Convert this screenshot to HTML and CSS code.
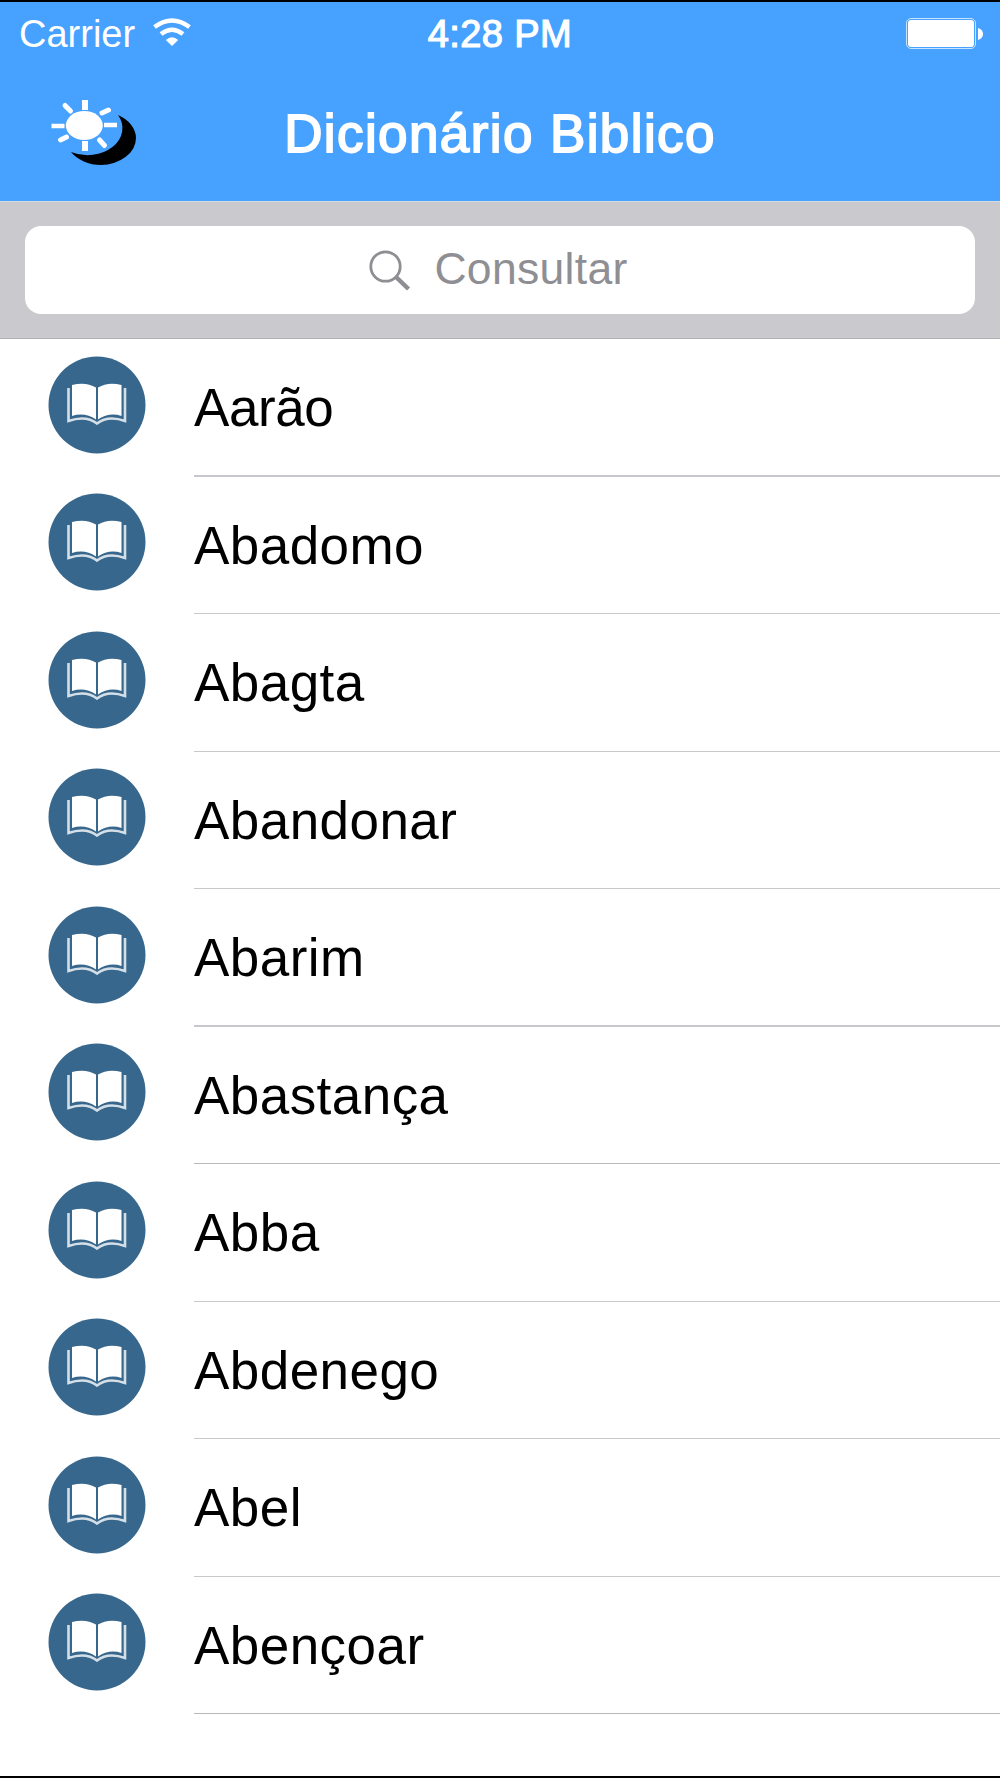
FILE: index.html
```html
<!DOCTYPE html>
<html lang="pt">
<head>
    <meta charset="UTF-8">
    <meta name="viewport" content="width=device-width, initial-scale=1.0">
    <title>Dicionário Biblico</title>
    <link rel="stylesheet" href="styles.css">
</head>
<body>

    <svg class="hidden">
        <symbol id="book" viewBox="0 0 98 98">
            <circle cx="49" cy="49" r="48.5" fill="#37678c"/>
            <path d="M20.500 32 V65 Q38 59 49 67.500 Q60 59 77 65 V32" fill="none" stroke="#d5dfe7" stroke-width="2.600"/>
            <path d="M24 29 Q38 25.500 48 31.500 V63.500 Q37 56 24 60 Z" fill="#fff"/>
            <path d="M73.500 29 Q60 25.500 50 31.500 V63.500 Q61 56 73.500 60 Z" fill="#fff"/>
        </symbol>
    </svg>

    <header>
        <div class="status">
            <div class="carrier">
                <span>Carrier</span>
                <svg class="wifi" width="38" height="29" viewBox="0 0 38 29">
                    <path d="M1.500 9 Q19 -4 36.500 9" fill="none" stroke="#fff" stroke-width="4.500"/>
                    <path d="M8 16 Q19 7.500 30 16" fill="none" stroke="#fff" stroke-width="4.500"/>
                    <path d="M12.800 22 Q19 16.500 25.200 22 L19 28 Z" fill="#fff"/>
                </svg>
            </div>
            <div class="time">4:28 PM</div>
            <div class="battery">
                <div class="level"></div>
                <svg width="5" height="12" viewBox="0 0 5 12"><path d="M0 0 Q5 1.500 5 6 Q5 10.500 0 12 Z" fill="#fff"/></svg>
            </div>
        </div>
        <div class="nav">
            <svg class="mode" width="88" height="68" viewBox="0 0 88 68">
                <path d="M68 15 A36 27 0 0 1 86 38 A36 27 0 0 1 51 65 A36 27 0 0 1 21 52 A35 27 0 0 0 68 15 Z" fill="#000"/>
                <ellipse cx="34.300" cy="25.500" rx="18.500" ry="14.500" fill="#fff"/>
                <g stroke="#fff">
                    <path stroke-width="6" d="M35 0 V10 M35 41 V51"/>
                    <path stroke-width="4.500" d="M1.500 26 H14.500 M54 25 H67"/>
                    <path stroke-linecap="round" stroke-width="5" d="M15 5.500 L20.500 11 M52 13 L58.500 10 M10.500 40 L16.500 37 M49.500 40 L54.500 45.500"/>
                </g>
            </svg>
            <h1>Dicionário Biblico</h1>
        </div>
    </header>

    <div class="search">
        <div class="field">
            <svg width="42" height="42" viewBox="0 0 42 42" fill="none" stroke="#8e8e93">
                <circle cx="16.500" cy="16.500" r="14.700" stroke-width="2.800"/>
                <path d="M26.500 26.500 L39.500 39" stroke-width="4.500"/>
            </svg>
            <span>Consultar</span>
        </div>
    </div>

    <ul class="list">
        <li><svg class="icon"><use href="#book"/></svg><span>Aarão</span></li>
        <li><svg class="icon"><use href="#book"/></svg><span>Abadomo</span></li>
        <li><svg class="icon"><use href="#book"/></svg><span>Abagta</span></li>
        <li><svg class="icon"><use href="#book"/></svg><span>Abandonar</span></li>
        <li><svg class="icon"><use href="#book"/></svg><span>Abarim</span></li>
        <li><svg class="icon"><use href="#book"/></svg><span>Abastança</span></li>
        <li><svg class="icon"><use href="#book"/></svg><span>Abba</span></li>
        <li><svg class="icon"><use href="#book"/></svg><span>Abdenego</span></li>
        <li><svg class="icon"><use href="#book"/></svg><span>Abel</span></li>
        <li><svg class="icon"><use href="#book"/></svg><span>Abençoar</span></li>
    </ul>

</body>
</html>
```

FILE: styles.css
```css
* {
    box-sizing: border-box;
}
body {
    margin: 0;
    height: 1778px;
    overflow: hidden;
    border-top: 2px solid black;
    border-bottom: 2px solid black;
    background-color: white;
    font-family: "Liberation Sans", Arial, sans-serif;
}
.hidden {
    display: none;
}

header {
    height: 199px;
    background-color: #46a1ff;
    color: white;
}
.status {
    display: grid;
    grid-template-columns: 1fr auto 1fr;
    height: 64px;
    font-size: 38px;
    line-height: 65px;
}
.carrier {
    display: flex;
    padding-left: 19px;
}
.wifi {
    margin: 16px 0 0 18px;
}
.time {
    letter-spacing: 0.4px;
    -webkit-text-stroke: 1.2px white;
}
.battery {
    display: flex;
    justify-content: flex-end;
    align-items: center;
    gap: 2px;
    height: 31px;
    margin-top: 16px;
    padding-right: 17px;
}
.level {
    width: 70px;
    height: 31px;
    padding: 1px;
    border: 1.5px solid #c9e4ff;
    border-radius: 5px;
    background-color: white;
    background-clip: content-box;
}
.nav {
    display: grid;
    grid-template-columns: 1fr auto 1fr;
}
.mode {
    margin: 34px 0 0 50px;
}
h1 {
    margin: 0;
    padding-top: 33px;
    font-size: 53px;
    font-weight: normal;
    line-height: 70px;
    letter-spacing: 1.4px;
    -webkit-text-stroke: 1.8px white;
}

.search {
    height: 138px;
    padding: 24px 25px 0;
    border-top: 1px solid #d5dbe2;
    border-bottom: 1px solid #b2b2b5;
    background-color: #c9c9ce;
}
.field {
    display: flex;
    justify-content: center;
    height: 88px;
    border-radius: 16px;
    background-color: white;
    color: #8e8e93;
    font-size: 44.5px;
    line-height: 86px;
    letter-spacing: 0.3px;
}
.field svg {
    margin: 24px 23px 0 -3px;
}

.list {
    margin: 0;
    padding: 0;
    list-style: none;
}
.list li {
    display: flex;
    height: 137.5px;
    padding-left: 48px;
}
.icon {
    width: 98px;
    height: 98px;
    margin: 16.5px 48px 0 0;
}
.list span {
    flex: 1;
    border-bottom: 1px solid #c8c7cc;
    font-size: 53px;
    line-height: 138px;
    letter-spacing: 0.45px;
}
.list li:first-child span {
    letter-spacing: -0.4px;
}
.list li:nth-child(1) span, .list li:nth-child(5) span {
    border-bottom-width: 2px;
}
.list li:nth-child(6) span, .list li:nth-child(10) span {
    border-bottom-color: #b9b8bd;
}
```
